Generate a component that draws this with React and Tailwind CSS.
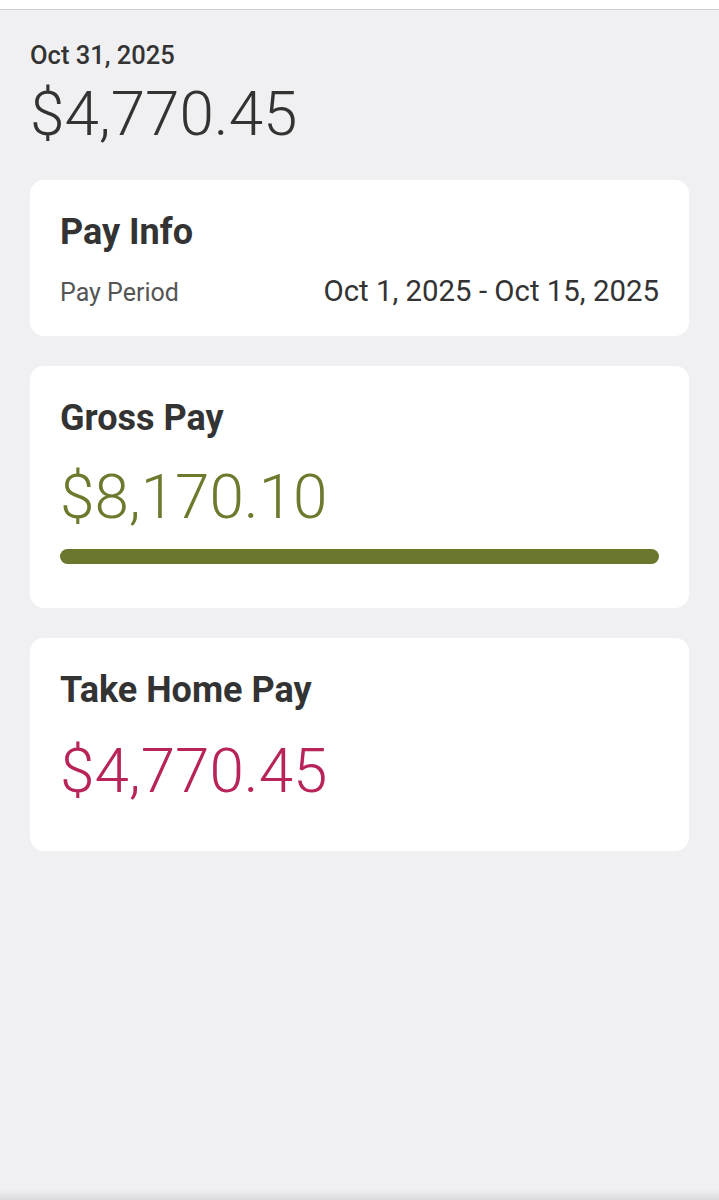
import React from 'react';

const font = { fontFamily: 'Roboto, "Noto Sans", sans-serif' };

const Card = ({ title, children }) => (
  <div className="bg-white rounded-[14px] px-[30px] pt-[30px]">
    <h2 className="text-[36px] leading-[44px] font-bold text-[#333333]">{title}</h2>
    {children}
  </div>
);

export default function App() {
  return (
    <div style={font} className="min-h-[1200px] flex flex-col bg-[#f0f0f2]">
      <div className="h-[10px] bg-white border-b border-[#cfcfd1]" />
      <div className="flex-1 px-[30px]">
        <p className="mt-[29px] text-[25.5px] leading-[32px] font-medium text-[#333333]">Oct 31, 2025</p>
        <p className="mt-[7px] text-[62px] leading-[72px] font-light text-[#333333]">$4,770.45</p>

        <div className="mt-[30px] flex flex-col gap-[30px]">
          <Card title="Pay Info">
            <div className="mt-[19px] pb-[25px] flex items-baseline justify-between">
              <span className="text-[25px] leading-[36px] text-[#555555]">Pay Period</span>
              <span className="text-[29.4px] leading-[36px] text-[#333333]">Oct 1, 2025 - Oct 15, 2025</span>
            </div>
          </Card>

          <Card title="Gross Pay">
            <p className="mt-[21px] text-[62px] leading-[72px] font-light text-[#6b7a2d]">$8,170.10</p>
            <div className="mt-[16px] mb-[44px] h-[15px] rounded-full bg-[#6b772c]" />
          </Card>

          <Card title="Take Home Pay">
            <p className="mt-[23px] pb-[44px] text-[62px] leading-[72px] font-light text-[#b8245a]">$4,770.45</p>
          </Card>
        </div>
      </div>
      <div className="h-[10px] bg-gradient-to-b from-[#f0f0f2] to-[#d9d9db]" />
    </div>
  );
}
